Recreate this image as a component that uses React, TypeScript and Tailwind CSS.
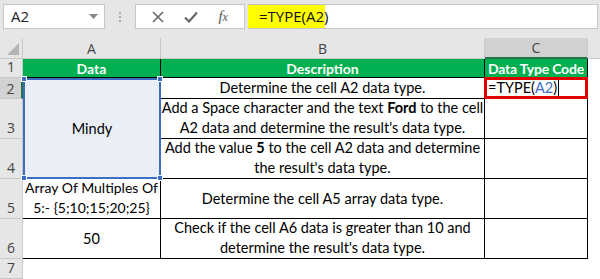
import React from "react";

const cellFont = { fontFamily: "Lato, 'Open Sans', sans-serif" };

function Handle({ cls }: { cls: string }) {
  return <div className={`absolute w-[6px] h-[6px] bg-[#3c6fc2] border border-white ${cls}`} />;
}

export default function App() {
  const hdr = "bg-[#e6e6e6] border-r border-b border-[#c8c8c8] text-[#444] text-[14px] flex items-center justify-center";
  const rowHdr = "bg-[#e6e6e6] border-r border-b border-[#c8c8c8] text-[#444] text-[14px] flex items-end justify-center pb-[1px] leading-[18px]";
  const base = "border-r border-b border-black bg-white text-[14.5px] text-black flex flex-col items-center text-center leading-[20px] whitespace-nowrap";
  const cell = `${base} justify-end`;
  const cellMid = `${base} justify-center`;
  const green = "bg-[#00b050] border-r border-b border-black text-white font-bold text-[14px] flex items-center justify-center whitespace-nowrap";
  return (
    <div className="w-[600px] h-[279px] bg-[#e6e6e6] overflow-hidden" style={{ fontFamily: "'Open Sans', 'Noto Sans', sans-serif" }}>
      {/* Formula bar */}
      <div className="h-[38px] flex items-start pt-[4px] pl-[3px] pr-[2px]">
        <div className="w-[102px] h-[25px] bg-white border border-[#c6c6c6] flex items-center pl-[7px] pr-[6px] text-[15px] text-[#222]">
          <span className="flex-1">A2</span>
          <svg width="9" height="5" viewBox="0 0 9 5"><path d="M0 0h9L4.5 5z" fill="#888" /></svg>
        </div>
        <div className="w-[30px] h-[25px] flex flex-col items-center justify-center gap-[2px]">
          <div className="w-[2px] h-[2px] bg-[#aaa]" />
          <div className="w-[2px] h-[2px] bg-[#aaa]" />
          <div className="w-[2px] h-[2px] bg-[#aaa]" />
        </div>
        <div className="w-[110px] h-[25px] bg-white border border-[#c6c6c6] flex items-center justify-around px-[6px]">
          <svg width="12" height="12" viewBox="0 0 12 12"><path d="M1 1L11 11M11 1L1 11" stroke="#666" strokeWidth="1.6" /></svg>
          <svg width="14" height="12" viewBox="0 0 14 12"><path d="M1 6.5L5 10.5L13 1.5" stroke="#666" strokeWidth="2.2" fill="none" /></svg>
          <span className="text-[15px] italic text-[#555]" style={{ fontFamily: "'Liberation Serif', serif" }}>f<span className="text-[12px]">x</span></span>
        </div>
        <div className="flex-1 ml-[3px] h-[25px] bg-white border border-[#c6c6c6] border-l-0 flex items-stretch">
          <div className="bg-[#ffff00] w-[77px] flex items-center pl-[11px] text-[15px] text-[#111]" style={{ fontFamily: "'Open Sans', sans-serif" }}>=TYPE(A2)</div>
        </div>
      </div>
      {/* Sheet */}
      <div className="grid grid-cols-[23px_138px_324px_103px_1fr] grid-rows-[21px_19px_21px_40px_40px_40px_40px_20px]">
        {/* column header */}
        <div className={`${hdr} relative`}>
          <svg className="absolute right-[3px] bottom-[3px]" width="12" height="12" viewBox="0 0 12 12"><path d="M12 0V12H0z" fill="#b5b5b5" /></svg>
        </div>
        <div className={hdr}>A</div>
        <div className={hdr}>B</div>
        <div className="bg-[#d2d2d2] border-r border-b-2 border-r-[#c8c8c8] border-b-[#217346] text-[#444] text-[14px] flex items-center justify-center">C</div>
        <div className="bg-[#e6e6e6] border-b border-[#c8c8c8]" />

        {/* row 1 */}
        <div className={rowHdr}>1</div>
        <div className={green} style={cellFont}>Data</div>
        <div className={green} style={cellFont}>Description</div>
        <div className={`${green} tracking-[-0.2px]`} style={cellFont}>Data Type Code</div>
        <div className="bg-white" />

        {/* row 2 */}
        <div className="bg-[#d2d2d2] border-b border-r-2 border-b-[#c8c8c8] border-r-[#217346] text-[#444] text-[14px] flex items-end justify-center leading-[18px]">2</div>
        <div className="row-span-3 relative bg-[#e9eef7] border-2 border-[#3c6fc2] flex items-center justify-center text-[14.5px] text-black" style={cellFont}>
          Mindy
          <Handle cls="-left-[4px] -top-[4px]" />
          <Handle cls="-right-[4px] -top-[4px]" />
          <Handle cls="-left-[4px] -bottom-[4px]" />
          <Handle cls="-right-[4px] -bottom-[4px]" />
        </div>
        <div className={cell} style={cellFont}>Determine the cell A2 data type.</div>
        <div className="relative border-r border-b border-black bg-white">
          <div className="absolute -left-[1px] -top-[1px] -right-[1px] -bottom-[1px] border-[3px] border-[#e00000] flex items-center pl-[1px] text-[14.5px] text-black whitespace-nowrap" style={cellFont}>
            =TYPE(<span className="text-[#3c6fc2]">A2</span>)<span className="w-[1px] h-[16px] bg-black ml-[1px]" />
          </div>
        </div>
        <div className="bg-white" />

        {/* row 3 */}
        <div className={rowHdr}>3</div>
        <div className={cell} style={cellFont}>
          <div>Add a Space character and the text <b>Ford</b> to the cell</div>
          <div>A2 data and determine the result's data type.</div>
        </div>
        <div className={cell} />
        <div className="bg-white" />

        {/* row 4 */}
        <div className={rowHdr}>4</div>
        <div className={cell} style={cellFont}>
          <div>Add the value <b>5</b> to the cell A2 data and determine</div>
          <div>the result's data type.</div>
        </div>
        <div className={cell} />
        <div className="bg-white" />

        {/* row 5 */}
        <div className={rowHdr}>5</div>
        <div className={`${cell} text-[14px]`} style={cellFont}>
          <div>Array Of Multiples Of</div>
          <div>5:- {"{5;10;15;20;25}"}</div>
        </div>
        <div className={cellMid} style={cellFont}>Determine the cell A5 array data type.</div>
        <div className={cell} />
        <div className="bg-white" />

        {/* row 6 */}
        <div className={rowHdr}>6</div>
        <div className={cellMid} style={cellFont}>50</div>
        <div className={cell} style={cellFont}>
          <div>Check if the cell A6 data is greater than 10 and</div>
          <div>determine the result's data type.</div>
        </div>
        <div className={cell} />
        <div className="bg-white" />

        {/* row 7 */}
        <div className={rowHdr}>7</div>
        <div className="bg-white" />
        <div className="bg-white" />
        <div className="bg-white" />
        <div className="bg-white" />
      </div>
    </div>
  );
}
